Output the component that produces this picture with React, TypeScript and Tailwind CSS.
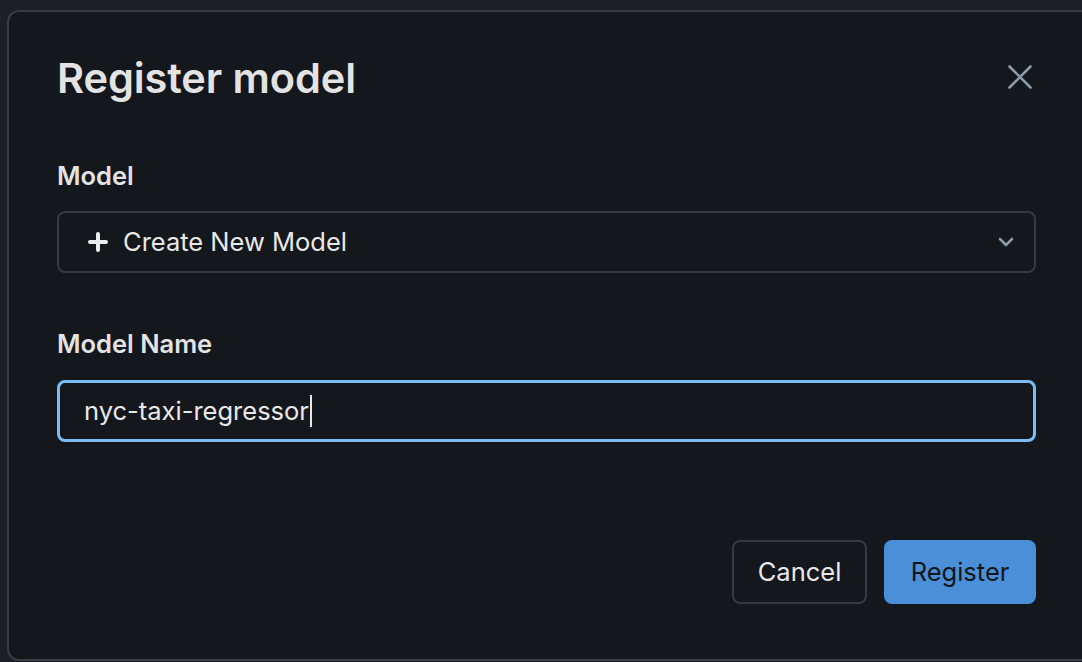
import React from "react";

export default function App() {
  return (
    <div
      className="w-[1082px] h-[662px] overflow-hidden bg-[#1c2026] pt-[10px] pl-[7px]"
      style={{ fontFamily: "Inter, 'Noto Sans', sans-serif" }}
    >
      <div className="w-[1100px] h-[651px] bg-[#14171c] border-2 border-[#373d45] rounded-[12px] pl-[48px] pt-[40px] flex flex-col">
        <div className="flex items-center justify-between h-[52px] w-[979px]">
          <h1 className="text-[41.5px] font-semibold text-[#e3e3e3] tracking-[-0.1px]">Register model</h1>
          <svg width="26" height="26" viewBox="0 0 26 26" className="mr-[3px] mt-[-2px]">
            <path d="M2.5 2.5 L23.5 23.5 M23.5 2.5 L2.5 23.5" stroke="#8d9ba8" strokeWidth="2.6" strokeLinecap="round" />
          </svg>
        </div>
        <div className="mt-[57px] text-[25.5px] font-semibold text-[#e3e3e3] leading-[30px]">Model</div>
        <div className="mt-[20px] h-[62px] shrink-0 w-[979px] rounded-[8px] border-2 border-[#343a42] flex items-center pl-[29px] pr-[20px]">
          <svg width="20" height="20" viewBox="0 0 20 20">
            <path d="M10 2 V18 M2 10 H18" stroke="#ececec" strokeWidth="4" strokeLinecap="round" />
          </svg>
          <span className="ml-[15px] text-[25.5px] text-[#e8e8e8]">Create New Model</span>
          <svg width="16" height="10" viewBox="0 0 16 10" className="ml-auto">
            <path d="M2 2 L8 8 L14 2" fill="none" stroke="#8d9ba8" strokeWidth="2.6" strokeLinecap="round" strokeLinejoin="round" />
          </svg>
        </div>
        <div className="mt-[56px] text-[25.5px] font-semibold text-[#e3e3e3] leading-[30px]">Model Name</div>
        <div className="mt-[21px] h-[62px] shrink-0 w-[979px] rounded-[8px] border-[3px] border-[#7cbcf5] flex items-center pl-[24px]">
          <span className="text-[25.5px] text-[#e8e8e8]">nyc-taxi-regressor</span>
          <span className="w-[2px] h-[32px] bg-[#e8e8e8] ml-[1px]"></span>
        </div>
        <div className="mt-[98px] w-[979px] flex justify-end gap-[17px]">
          <button className="h-[64px] w-[135px] rounded-[8px] border-2 border-[#343a42] text-[25.5px] text-[#e8e8e8]">Cancel</button>
          <button className="h-[64px] w-[152px] rounded-[8px] bg-[#4a8fd7] text-[25.5px] text-[#12161b]">Register</button>
        </div>
      </div>
    </div>
  );
}
